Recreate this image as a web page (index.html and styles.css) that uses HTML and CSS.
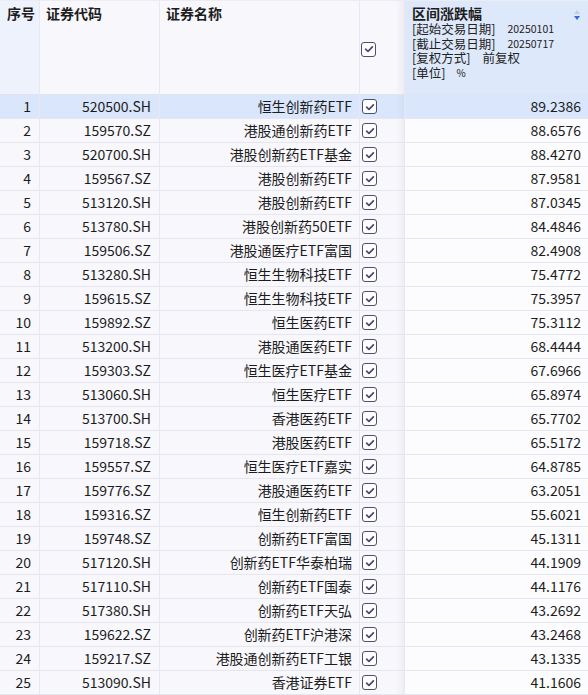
FILE: index.html
```html
<!DOCTYPE html>
<html>
<head>
<meta charset="utf-8">
<link rel="stylesheet" href="styles.css">
</head>
<body>
<div class="grid" id="grid">
  <div class="head">
    <div class="hc c-idx"><span class="ht">序号</span></div>
    <div class="hc c-code"><span class="ht">证券代码</span></div>
    <div class="hc c-name"><span class="ht">证券名称</span></div>
    <div class="hc c-chk hc-chk"><span class="cb"></span></div>
    <div class="hc c-val hc-val">
      <div class="vt">区间涨跌幅</div>
      <div class="vl"><span class="lb">[起始交易日期]</span><span class="num">20250101</span></div>
      <div class="vl"><span class="lb">[截止交易日期]</span><span class="num">20250717</span></div>
      <div class="vl"><span class="lb">[复权方式]</span><span class="txt">前复权</span></div>
      <div class="vl"><span class="lb">[单位]</span><span class="pct">%</span></div>
      <span class="sort"><span class="up"></span><span class="down"></span></span>
    </div>
  </div>
</div>
<script src="app.js"></script>
</body>
</html>
```
FILE: app.js
```js
const data = [
["520500.SH","恒生创新药ETF","89.2386"],
["159570.SZ","港股通创新药ETF","88.6576"],
["520700.SH","港股创新药ETF基金","88.4270"],
["159567.SZ","港股创新药ETF","87.9581"],
["513120.SH","港股创新药ETF","87.0345"],
["513780.SH","港股创新药50ETF","84.4846"],
["159506.SZ","港股通医疗ETF富国","82.4908"],
["513280.SH","恒生生物科技ETF","75.4772"],
["159615.SZ","恒生生物科技ETF","75.3957"],
["159892.SZ","恒生医药ETF","75.3112"],
["513200.SH","港股通医药ETF","68.4444"],
["159303.SZ","恒生医疗ETF基金","67.6966"],
["513060.SH","恒生医疗ETF","65.8974"],
["513700.SH","香港医药ETF","65.7702"],
["159718.SZ","港股医药ETF","65.5172"],
["159557.SZ","恒生医疗ETF嘉实","64.8785"],
["159776.SZ","港股通医药ETF","63.2051"],
["159316.SZ","恒生创新药ETF","55.6021"],
["159748.SZ","创新药ETF富国","45.1311"],
["517120.SH","创新药ETF华泰柏瑞","44.1909"],
["517110.SH","创新药ETF国泰","44.1176"],
["517380.SH","创新药ETF天弘","43.2692"],
["159622.SZ","创新药ETF沪港深","43.2468"],
["159217.SZ","港股通创新药ETF工银","43.1335"],
["513090.SH","香港证券ETF","41.1606"]
];
const grid = document.getElementById('grid');
data.forEach((r, i) => {
  const row = document.createElement('div');
  row.className = 'row' + (i === 0 ? ' sel' : '');
  row.innerHTML =
    '<div class="c c-idx">' + (i + 1) + '</div>' +
    '<div class="c c-code">' + r[0] + '</div>' +
    '<div class="c c-name">' + r[1] + '</div>' +
    '<div class="c c-chk"><span class="cb"></span></div>' +
    '<div class="c c-val">' + r[2] + '</div>';
  grid.appendChild(row);
});
```
FILE: styles.css
```css
* { box-sizing: border-box; }
html, body { margin: 0; padding: 0; background: #f8f8fc; }
body {
  font-family: "Microsoft YaHei", "Noto Sans CJK SC", "Noto Sans", sans-serif;
  font-size: 14px;
  color: #1c1c1c;
  width: 588px;
  height: 695px;
  overflow: hidden;
}
.grid { width: 588px; border-top: 1px solid #ececf4; }
.head, .row {
  display: grid;
  grid-template-columns: 40px 120px 200px 45px 183px;
}
.head { height: 94px; }
.row { height: 24px; }
.hc {
  border-right: 1px solid #e8e8f2;
  border-bottom: 1px solid #e3e3ee;
  background: #f7f7fc;
  position: relative;
}
.hc.c-idx { background: #eef2fc; }
.ht {
  display: block;
  font-weight: bold;
  padding: 3px 0 0 6px;
  line-height: 18px;
  font-size: 14px;
}
.c-idx .ht { padding-left: 7px; }
.hc-chk {
  display: flex;
  align-items: center;
  padding-left: 1px;
  padding-top: 3px;
  background: linear-gradient(to right, #f7f7fc 36px, #ececf2 44px);
}
.hc-val {
  background: #dde8fa;
  border-right: none;
  padding: 3px 0 0 7px;
}
.vt { font-weight: bold; font-size: 14px; line-height: 18px; }
.vl {
  height: 14.5px;
  color: #222;
  white-space: nowrap;
  display: flex;
  align-items: center;
}
.vl span {
  display: inline-block;
  height: 14.5px;
  line-height: 14.5px;
  overflow: visible;
}
.vl .lb { font-size: 12.5px; }
.vl .num { font-size: 10.5px; margin-left: 12px; }
.vl .txt { font-size: 12.5px; margin-left: 12px; }
.vl .pct { font-size: 10px; margin-left: 11px; }
.sort {
  position: absolute;
  right: 8px;
  top: 9px;
  display: flex;
  flex-direction: column;
  gap: 2px;
}
.sort .up {
  width: 0; height: 0;
  border-left: 3.5px solid transparent;
  border-right: 3.5px solid transparent;
  border-bottom: 4px solid #c5cede;
}
.sort .down {
  width: 0; height: 0;
  border-left: 3.5px solid transparent;
  border-right: 3.5px solid transparent;
  border-top: 4px solid #2f6fd8;
}
.c {
  border-right: 1px solid #e8e8f2;
  border-bottom: 1px solid #e6e6f0;
  background: #f8f8fc;
  text-align: right;
  line-height: 23px;
  padding-right: 8px;
  white-space: nowrap;
}
.c.c-name { padding-right: 7px; }
.c.c-chk {
  padding: 0 0 0 2px;
  display: flex;
  align-items: center;
  background: linear-gradient(to right, #f8f8fc 36px, #ededf3 44px);
}
.c.c-val {
  border-right: none;
  background: #fcfcfe;
  padding-right: 7px;
}
.row.sel .c { background: #d9e6fb; }
.row.sel .c.c-chk { background: linear-gradient(to right, #d9e6fb 36px, #d2dff4 44px); }
.cb {
  display: inline-block;
  width: 15px;
  height: 15px;
  border: 1.5px solid #4e4e72;
  border-radius: 3px;
  background: #fff url("data:image/svg+xml;utf8,<svg xmlns='http://www.w3.org/2000/svg' width='12' height='12' viewBox='0 0 12 12'><path d='M2.6 6.2 L5 8.4 L9.4 3.8' fill='none' stroke='%234a4a72' stroke-width='1.7' stroke-linecap='round' stroke-linejoin='round'/></svg>") center/12px 12px no-repeat;
}
```
